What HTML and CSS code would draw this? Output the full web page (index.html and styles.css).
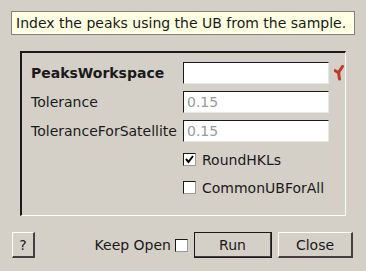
FILE: index.html
```html
<!DOCTYPE html>
<html lang="en">
<head>
    <meta charset="UTF-8">
    <title>IndexPeaks</title>
    <link rel="stylesheet" href="styles.css">
</head>
<body>
    <div class="dialog">
        <div class="tooltip">Index the peaks using the UB from the sample.</div>

        <div class="frame">
            <div class="form-grid">
                <label class="field-label bold">PeaksWorkspace</label>
                <div class="text-input"></div>
                <svg class="required" width="10" height="16" viewBox="0 0 10 16">
                    <path d="M8.5 1.5 L4.5 7.5 M0.8 5.5 L5 8 M4.5 7.5 L5.5 14" stroke="#c0392b" stroke-width="3" stroke-linecap="round" fill="none"/>
                </svg>

                <label class="field-label">Tolerance</label>
                <div class="text-input placeholder">0.15</div>
                <span></span>

                <label class="field-label">ToleranceForSatellite</label>
                <div class="text-input placeholder">0.15</div>
                <span></span>

                <span></span>
                <div class="check-row">
                    <span class="checkbox">
                        <svg width="9" height="9" viewBox="0 0 9 9">
                            <path d="M1 4 L3.5 7 L8 1" stroke="#000" stroke-width="2" fill="none"/>
                        </svg>
                    </span>
                    RoundHKLs
                </div>
                <span></span>

                <span></span>
                <div class="check-row">
                    <span class="checkbox"></span>
                    CommonUBForAll
                </div>
                <span></span>
            </div>
        </div>

        <div class="button-bar">
            <button class="btn btn-help">?</button>
            <div class="spacer"></div>
            <div class="keep-open">Keep Open <span class="checkbox"></span></div>
            <button class="btn btn-default">Run</button>
            <button class="btn btn-close">Close</button>
        </div>
    </div>
</body>
</html>
```

FILE: styles.css
```css
body {
    margin: 0;
    background: #d4d0c8;
    font-family: 'DejaVu Sans', sans-serif;
    font-size: 14px;
    color: #1a1a1a;
}

.dialog {
    width: 366px;
    height: 271px;
    padding-top: 11px;
    box-sizing: border-box;
}

.tooltip {
    margin: 0 11px;
    height: 24px;
    box-sizing: border-box;
    border: 1px solid #808080;
    background: #ffffe1;
    padding: 0 4px;
    line-height: 22px;
    color: #1a1a1a;
}

.frame {
    margin: 16px 0 0 20px;
    width: 326px;
    height: 165px;
    box-sizing: border-box;
    border-top: 2px solid #1a1a1a;
    border-left: 2px solid #1a1a1a;
    border-right: 1px solid #ffffff;
    border-bottom: 1px solid #ffffff;
    padding: 9px 0 0 9px;
}

.form-grid {
    display: grid;
    grid-template-columns: 152px 146px 14px;
    grid-template-rows: 22px 22px 22px 21px 21px;
    row-gap: 7px;
    align-items: center;
}

.field-label {
    white-space: nowrap;
}

.bold {
    font-weight: bold;
}

.text-input {
    height: 22px;
    box-sizing: border-box;
    background: #ffffff;
    border-top: 1px solid #1a1a1a;
    border-left: 1px solid #1a1a1a;
    border-right: 1px solid #e8e6e2;
    border-bottom: 1px solid #e8e6e2;
    padding-left: 3px;
    line-height: 20px;
}

.placeholder {
    color: #9a9a9a;
}

.required {
    margin-left: 5px;
}

.check-row {
    display: flex;
    align-items: center;
    gap: 6px;
}

.checkbox {
    display: inline-flex;
    align-items: center;
    justify-content: center;
    width: 13px;
    height: 13px;
    box-sizing: border-box;
    background: #ffffff;
    border-top: 1px solid #1a1a1a;
    border-left: 1px solid #1a1a1a;
    border-right: 1px solid #9a9a9a;
    border-bottom: 1px solid #9a9a9a;
}

.button-bar {
    display: flex;
    align-items: center;
    margin: 16px 13px 0 12px;
    height: 26px;
}

.spacer {
    flex: 1;
}

.keep-open {
    display: flex;
    align-items: center;
    gap: 4px;
    margin-right: 6px;
}

.btn {
    height: 26px;
    box-sizing: border-box;
    background: #d4d0c8;
    font-family: 'DejaVu Sans', sans-serif;
    font-size: 14px;
    color: #1a1a1a;
    border-top: 1px solid #ffffff;
    border-left: 1px solid #ffffff;
    border-right: 2px solid #404040;
    border-bottom: 2px solid #404040;
    padding: 0;
}

.btn-help {
    width: 23px;
}

.btn-default {
    width: 78px;
    outline: 1px solid #1a1a1a;
    outline-offset: -1px;
    margin-right: 6px;
}

.btn-close {
    width: 75px;
}
```
